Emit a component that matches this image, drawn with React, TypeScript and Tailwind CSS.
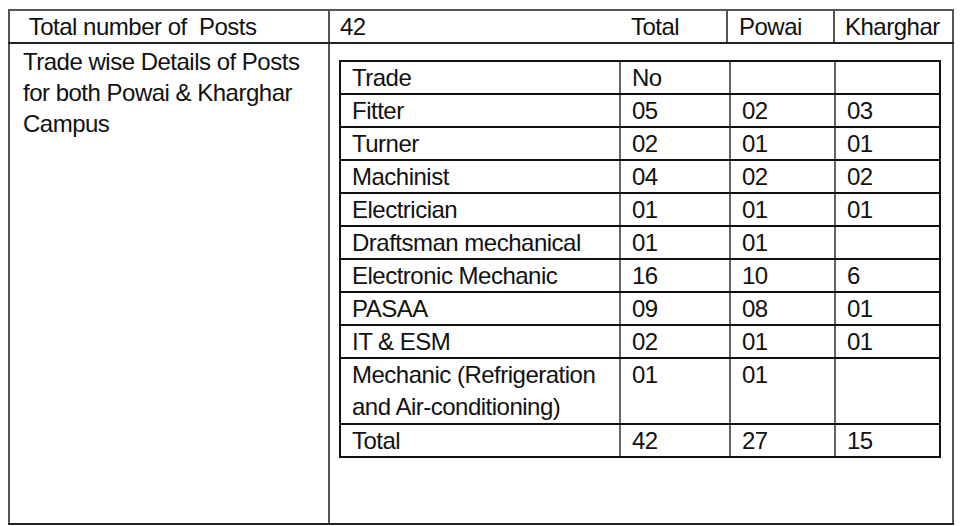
const trades: [string, string, string, string][] = [
  ["Trade", "No", "", ""],
  ["Fitter", "05", "02", "03"],
  ["Turner", "02", "01", "01"],
  ["Machinist", "04", "02", "02"],
  ["Electrician", "01", "01", "01"],
  ["Draftsman mechanical", "01", "01", ""],
  ["Electronic Mechanic", "16", "10", "6"],
  ["PASAA", "09", "08", "01"],
  ["IT & ESM", "02", "01", "01"],
  ["Mechanic (Refrigeration\nand Air-conditioning)", "01", "01", ""],
  ["Total", "42", "27", "15"],
];

function TradeTable() {
  return (
    <table className="w-[600px] table-fixed border-collapse border-2 border-[#111]">
      <colgroup>
        <col className="w-[280px]" />
        <col className="w-[110px]" />
        <col className="w-[105px]" />
        <col className="w-[105px]" />
      </colgroup>
      <tbody>
        {trades.map((row, i) => {
          const last = i === trades.length - 1;
          const tall = row[0].includes("\n");
          return (
            <tr key={i} className={last ? "border-t-2 border-[#111]" : ""}>
              {row.map((cell, j) => (
                <td
                  key={j}
                  className={`h-[31px] p-0 pl-[11px] align-top whitespace-pre-line border-[#111] border-y-2 ${
                    tall ? "leading-[32px]" : "leading-[31px]"
                  } ${j > 0 ? "border-l-2 border-l-[#666]" : ""} ${last ? "border-l-[#111]" : ""}`}
                >
                  {cell}
                </td>
              ))}
            </tr>
          );
        })}
      </tbody>
    </table>
  );
}

export default function App() {
  return (
    <div
      className="min-h-screen bg-white pl-[8px] pt-[9px] text-[24px] tracking-[-0.5px] text-[#111]"
      style={{ fontFamily: '"Liberation Sans", Arial, sans-serif' }}
    >
      <table className="w-[944px] table-fixed border-collapse">
        <colgroup>
          <col className="w-[320px]" />
          <col className="w-[292px]" />
          <col className="w-[106px]" />
          <col className="w-[107px]" />
          <col className="w-[119px]" />
        </colgroup>
        <tbody>
          <tr className="h-[32px]">
            <td className="border-2 border-[#555] border-b-[#222] p-0 pl-[13px] align-top leading-[31px] whitespace-pre">
              {" Total number of  Posts"}
            </td>
            <td className="border-y-2 border-l-2 border-[#555] border-b-[#222] p-0 pl-[10px] align-top leading-[31px]">
              42
            </td>
            <td className="border-y-2 border-[#555] border-b-[#222] p-0 pl-[10px] align-top leading-[31px]">
              Total
            </td>
            <td className="border-2 border-[#555] border-b-[#222] p-0 pl-[11px] align-top leading-[31px]">
              Powai
            </td>
            <td className="border-2 border-[#555] border-b-[#222] p-0 pl-[10px] align-top leading-[31px]">
              Kharghar
            </td>
          </tr>
          <tr className="h-[481px]">
            <td className="border-2 border-[#555] border-t-[#222] border-b-[#222] p-0 pl-[13px] pt-[2px] align-top leading-[31px]">
              Trade wise Details of Posts
              <br />
              for both Powai &amp; Kharghar
              <br />
              Campus
            </td>
            <td
              colSpan={4}
              className="border-2 border-[#555] border-t-[#222] border-b-[#222] p-0 pl-[9px] pt-[16px] align-top"
            >
              <TradeTable />
            </td>
          </tr>
        </tbody>
      </table>
    </div>
  );
}
